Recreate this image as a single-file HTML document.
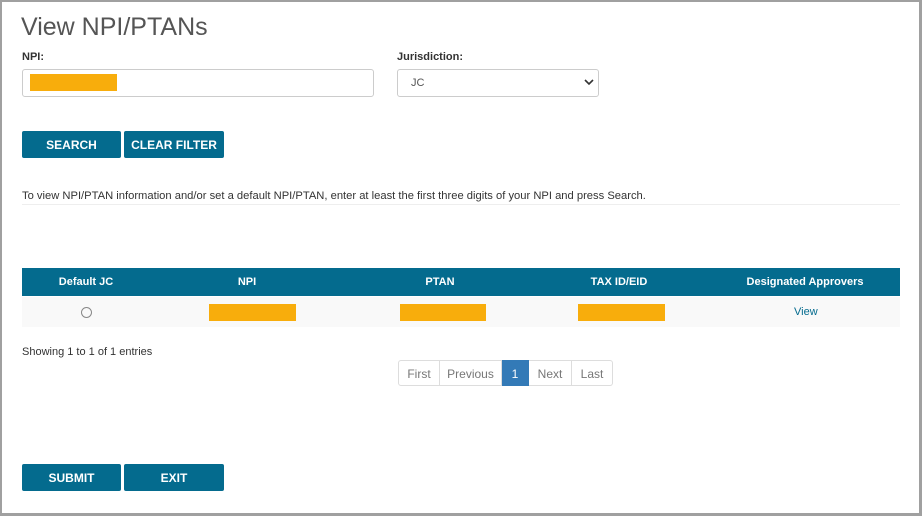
<!DOCTYPE html>
<html><head><style>
body{margin:0;width:923px;height:517px;background:#fff;font-family:"Liberation Sans",Arial,sans-serif;position:relative;overflow:hidden}
.frame{position:absolute;left:0;top:0;width:917px;height:511px;border:3px solid #a0a0a0;border-left-width:2px;border-top-width:2px}
.a{position:absolute}
.btn{position:absolute;background:#046b8e;color:#fff;font-weight:bold;font-size:12px;text-align:center;line-height:28px;height:27px;border-radius:2px}
.bar{position:absolute;background:#f8ad0c;height:17px}
.pg{position:absolute;top:360px;height:26px;line-height:27px;font-size:12px;color:#777;text-align:center;border:1px solid #ddd;border-left:none;box-sizing:border-box}
</style></head><body>
<div class="frame"></div>
<div class="a" style="left:21px;top:13px;font-size:25px;color:#555">View NPI/PTANs</div>
<div class="a" style="left:22px;top:51px;font-size:11px;font-weight:bold;color:#333">NPI:</div>
<div class="a" style="left:397px;top:51px;font-size:11px;font-weight:bold;color:#333">Jurisdiction:</div>
<div class="a" style="left:22px;top:69px;width:350px;height:26px;border:1px solid #ccc;border-radius:3px"></div>
<div class="bar" style="left:30px;top:74px;width:87px"></div>
<div class="a" style="left:397px;top:69px;width:200px;height:26px;border:1px solid #ccc;border-radius:3px"></div>
<div class="a" style="left:411px;top:77px;font-size:11px;color:#555">JC</div>
<svg class="a" style="left:584px;top:79px" width="10" height="7"><path d="M1 1L5 5L9 1" stroke="#333" stroke-width="1.6" fill="none"/></svg>
<div class="btn" style="left:22px;top:131px;width:99px">SEARCH</div>
<div class="btn" style="left:124px;top:131px;width:100px">CLEAR FILTER</div>
<div class="a" style="left:22px;top:190px;font-size:11.2px;color:#333">To view NPI/PTAN information and/or set a default NPI/PTAN, enter at least the first three digits of your NPI and press Search.</div>
<div class="a" style="left:22px;top:204px;width:878px;height:1px;background:#eee"></div>
<div class="a" style="left:22px;top:268px;width:878px;height:28px;background:#046b8e;color:#fff;font-weight:bold;font-size:11px;line-height:28px">
<span class="a" style="left:0;width:128px;text-align:center">Default JC</span>
<span class="a" style="left:180px;width:90px;text-align:center">NPI</span>
<span class="a" style="left:373px;width:90px;text-align:center">PTAN</span>
<span class="a" style="left:552px;width:90px;text-align:center">TAX ID/EID</span>
<span class="a" style="left:713px;width:140px;text-align:center">Designated Approvers</span>
</div>
<div class="a" style="left:22px;top:297px;width:878px;height:30px;background:#f9f9f9"></div>
<div class="a" style="left:81px;top:307px;width:9px;height:9px;border:1px solid #888;border-radius:50%"></div>
<div class="bar" style="left:209px;top:304px;width:87px"></div>
<div class="bar" style="left:400px;top:304px;width:86px"></div>
<div class="bar" style="left:578px;top:304px;width:87px"></div>
<div class="a" style="left:794px;top:306px;font-size:11px;color:#046b8e">View</div>
<div class="a" style="left:22px;top:346px;font-size:11px;color:#333">Showing 1 to 1 of 1 entries</div>
<div class="pg" style="left:398px;width:42px;border-left:1px solid #ddd;border-radius:3px 0 0 3px">First</div>
<div class="pg" style="left:440px;width:62px">Previous</div>
<div class="pg" style="left:502px;width:27px;background:#337ab7;color:#fff;border-color:#337ab7">1</div>
<div class="pg" style="left:529px;width:43px">Next</div>
<div class="pg" style="left:572px;width:41px;border-radius:0 3px 3px 0">Last</div>
<div class="btn" style="left:22px;top:464px;width:99px">SUBMIT</div>
<div class="btn" style="left:124px;top:464px;width:100px">EXIT</div>
</body></html>
